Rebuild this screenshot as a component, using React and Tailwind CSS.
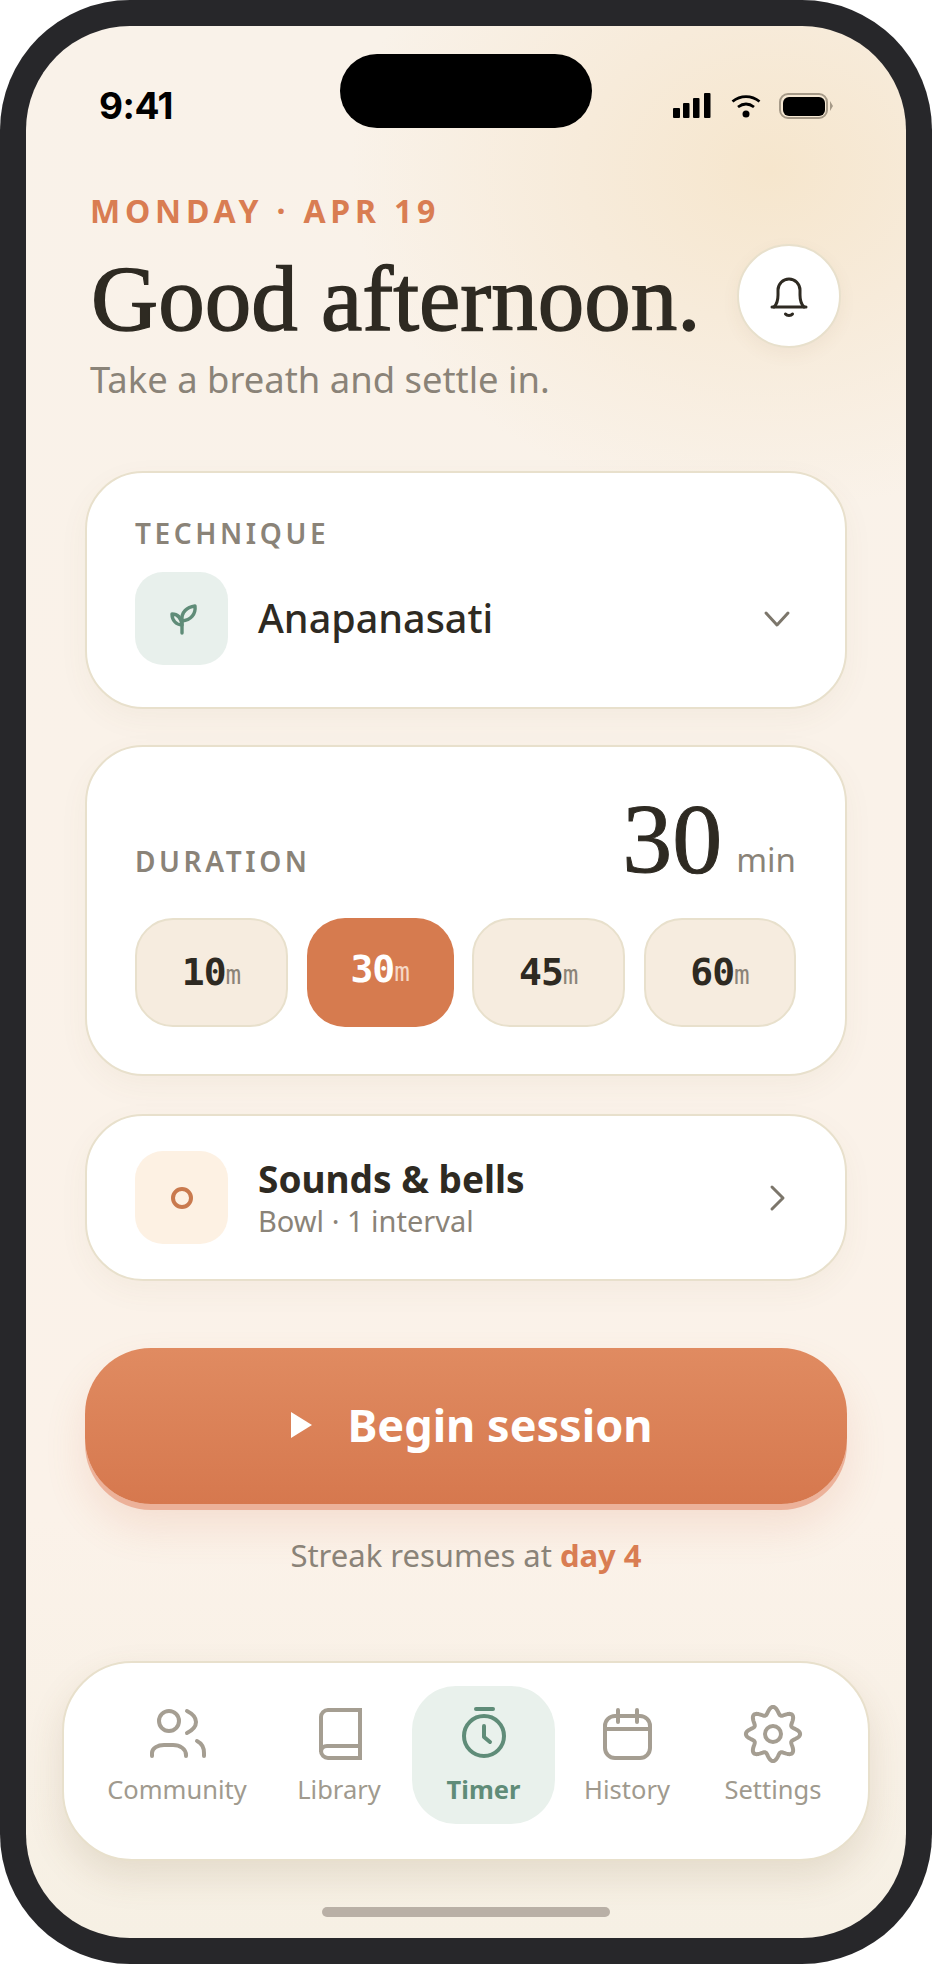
import React from "react";

function gearPath() {
  const pts = [];
  for (let i = 0; i <= 240; i++) {
    const t = (i / 240) * Math.PI * 2;
    const r = 23.5 + 3.6 * Math.cos(8 * t);
    const x = 30 + r * Math.sin(t);
    const y = 29 - r * Math.cos(t);
    pts.push((i ? "L" : "M") + x.toFixed(2) + " " + y.toFixed(2));
  }
  return pts.join("") + "Z";
}

const navIconProps = {
  width: 60,
  height: 60,
  viewBox: "0 0 60 60",
  fill: "none",
  strokeWidth: 4,
  strokeLinecap: "round",
  strokeLinejoin: "round",
};

function CommunityIcon() {
  return (
    <svg {...navIconProps} stroke="#a59e92">
      <circle cx="22" cy="16" r="10" />
      <path d="M40 6c6 3 9 7 9 11s-3 8-9 11" />
      <path d="M5 51v-3c0-5 6-8 12-8h9c7 0 13 4 13 10v1" />
      <path d="M50 36c4 2 7 6 7 12v3" />
    </svg>
  );
}
function BookIcon() {
  return (
    <svg {...navIconProps} stroke="#a59e92" strokeLinecap="butt" strokeLinejoin="miter">
      <path d="M51 5H19a7 7 0 0 0-7 7v34a7 7 0 0 0 7 7h32z" />
      <path d="M12 47a6 6 0 0 1 6-6h33" />
    </svg>
  );
}
function TimerIcon() {
  return (
    <svg {...navIconProps} stroke="#5f8c78">
      <path d="M22 4h17" />
      <circle cx="30" cy="31" r="20" />
      <path d="M30 21v11l6 5" />
    </svg>
  );
}
function CalendarIcon() {
  return (
    <svg {...navIconProps} stroke="#a59e92">
      <rect x="8" y="11" width="45" height="42" rx="10" />
      <path d="M8 24h45" strokeLinecap="butt" />
      <path d="M21 5v12M40 5v12" />
    </svg>
  );
}
function GearIcon() {
  return (
    <svg {...navIconProps} stroke="#a59e92">
      <path d={gearPath()} />
      <circle cx="30" cy="29" r="8" />
    </svg>
  );
}

function NavItem({ w, label, active, children }) {
  return (
    <div className={active ? "flex flex-col items-center h-[138px] pt-[19px] rounded-[44px] bg-[#e9f1ec] " + w : "flex flex-col items-center h-[138px] pt-[19px] " + w}>
      {children}
      <span className={active ? "mt-[8px] text-[25.500px] leading-[32px] font-bold text-[#5f8c78]" : "mt-[8px] text-[25.500px] leading-[32px] font-normal text-[#a09a8e]"}>{label}</span>
    </div>
  );
}

function Chip({ w, value, active }) {
  if (active) {
    return (
      <div className={"h-[109px] rounded-[38px] bg-[#d67b4f] flex items-center justify-center pb-[6px] font-['DejaVu_Sans_Mono',monospace] " + w}>
        <span className="text-[38px] font-bold text-white tracking-[-1px]">{value}</span>
        <span className="text-[26px] text-[#f6d8c6] mt-[6px]">m</span>
      </div>
    );
  }
  return (
    <div className={"h-[109px] rounded-[38px] bg-[#f6ecdf] border-2 border-[#e8e0cc] flex items-center justify-center font-['DejaVu_Sans_Mono',monospace] " + w}>
      <span className="text-[38px] font-bold text-[#2e2a22] tracking-[-1px]">{value}</span>
      <span className="text-[26px] text-[#8a8378] mt-[6px]">m</span>
    </div>
  );
}

export default function App() {
  return (
    <div className="w-[932px] h-[1964px] bg-[#27272a] rounded-[130px] p-[26px] font-['Noto_Sans',sans-serif]">
      <div className="relative w-[880px] h-[1912px] rounded-[104px] overflow-hidden bg-[radial-gradient(ellipse_420px_340px_at_744px_144px,#f6e6cd_0%,#f7ebda_45%,rgba(249,242,233,0)_100%),linear-gradient(to_bottom,#f9f2e9_0%,#fbf2e9_78%,#f6f0e4_100%)]">
        <div className="absolute left-[314px] top-[28px] w-[252px] h-[74px] rounded-full bg-black" />

        <div className="mt-[60px] h-[40px] pl-[73px] pr-[73px] flex items-center justify-between">
          <span className="font-['Inter',sans-serif] font-bold text-[37px] leading-[40px] text-black tracking-[-0.5px]">9:41</span>
          <div className="flex items-center">
            <svg width="38" height="26" viewBox="0 0 38 26" fill="#000">
              <rect x="0" y="15" width="7" height="10" rx="1" />
              <rect x="10" y="10" width="6.5" height="15" rx="1" />
              <rect x="20" y="5" width="6.5" height="20" rx="1" />
              <rect x="31" y="0" width="6.5" height="25" rx="1" />
            </svg>
            <svg className="ml-[20px]" width="30" height="26" viewBox="0 0 30 26" fill="none" stroke="#000" strokeWidth="2.8">
              <path d="M1.5 8.5c8-6.5 19-6.500 27 0" />
              <path d="M7 14c5-3.800 11-3.800 16 0" />
              <circle cx="15" cy="21" r="3.500" fill="#000" stroke="none" />
            </svg>
            <div className="ml-[18px] w-[49px] h-[26px] rounded-[9px] border-2 border-[#a69a88] p-[1.5px]">
              <div className="w-full h-full rounded-[6px] bg-black" />
            </div>
            <svg className="ml-[2px]" width="3" height="10" viewBox="0 0 3 10" fill="#a69a88">
              <path d="M0 0l3 5-3 5z" />
            </svg>
          </div>
        </div>

        <div className="mt-[65px] pl-[64px] h-[40px] text-[32px] leading-[40px] font-bold tracking-[4.8px] text-[#d97d52]">MONDAY · APR 19</div>

        <div className="mt-[13px] pl-[65px] pr-[65px] flex items-start justify-between">
          <h1 className="mt-[7px] font-['Liberation_Serif',serif] font-normal text-[93px] leading-[96px] text-[#2e2a22] [-webkit-text-stroke:1.4px_#2e2a22]">Good afternoon.</h1>
          <div className="w-[104px] h-[104px] rounded-full bg-white border-2 border-[#e8e0cc] flex items-center justify-center shadow-[0_6px_18px_rgba(120,90,50,0.06)]">
            <svg width="48" height="48" viewBox="0 0 48 48" fill="none" stroke="#2e2a22" strokeWidth="3" strokeLinecap="round" strokeLinejoin="round">
              <path d="M9 35c3-3 4-7 4-12v-5a11 11 0 0 1 22 0v5c0 5 1 9 4 12" />
              <path d="M7 35h34" />
              <path d="M20.500 42a4 3 0 0 0 7 0" />
            </svg>
          </div>
        </div>

        <p className="mt-[9px] pl-[64px] h-[44px] text-[36.400px] leading-[44px] text-[#8a8378]">Take a breath and settle in.</p>

        <div className="mt-[70px] mx-[59px] h-[238px] rounded-[58px] bg-white border-2 border-[#e8e0cc] pl-[48px] pr-[52px] pt-[40px] shadow-[0_10px_30px_rgba(120,90,50,0.05)]">
          <div className="h-[40px] text-[28px] leading-[40px] font-semibold tracking-[3.6px] text-[#8a8378]">TECHNIQUE</div>
          <div className="mt-[19px] flex items-center">
            <div className="w-[93px] h-[93px] rounded-[28px] bg-[#e8f0ec] flex items-center justify-center">
              <svg width="32" height="32" viewBox="0 0 32 32" fill="none" stroke="#5f8c78" strokeWidth="3.4" strokeLinecap="round" strokeLinejoin="round">
                <path d="M16 17v13" />
                <path d="M16 18c-1-9 5-14 13-15 1 8-4 14-13 15z" />
                <path d="M16 22c-6 0-10-5-10-11 5 0 9 3 10 11z" />
              </svg>
            </div>
            <span className="ml-[30px] text-[39.500px] font-medium text-[#2e2a22]">Anapanasati</span>
            <svg className="ml-auto" width="32" height="32" viewBox="0 0 32 32" fill="none" stroke="#7c766b" strokeWidth="3" strokeLinecap="round" strokeLinejoin="round">
              <path d="M5 10l11 12 11-12" />
            </svg>
          </div>
        </div>

        <div className="mt-[36px] mx-[59px] h-[331px] rounded-[58px] bg-white border-2 border-[#e8e0cc] pl-[48px] pr-[49px] pt-[43px] shadow-[0_10px_30px_rgba(120,90,50,0.05)]">
          <div className="flex items-baseline justify-between">
            <span className="text-[28px] font-semibold tracking-[3.6px] text-[#8a8378]">DURATION</span>
            <div className="flex items-baseline">
              <span className="font-['Liberation_Serif',serif] text-[100px] leading-[98px] text-[#2e2a22] [-webkit-text-stroke:1px_#2e2a22]">30</span>
              <span className="ml-[14px] text-[33px] text-[#8a8378]">min</span>
            </div>
          </div>
          <div className="mt-[30px] flex justify-between">
            <Chip w="w-[153px]" value="10" />
            <Chip w="w-[147px]" value="30" active />
            <Chip w="w-[153px]" value="45" />
            <Chip w="w-[152px]" value="60" />
          </div>
        </div>

        <div className="mt-[38px] mx-[59px] h-[167px] rounded-[58px] bg-white border-2 border-[#e8e0cc] pl-[48px] pr-[52px] flex items-center shadow-[0_10px_30px_rgba(120,90,50,0.05)]">
          <div className="w-[93px] h-[93px] rounded-[28px] bg-[#fdf1e3] flex items-center justify-center">
            <div className="w-[22px] h-[22px] rounded-full border-4 border-[#c97a4e]" />
          </div>
          <div className="ml-[30px]">
            <div className="text-[37px] leading-[44px] font-bold text-[#2e2a22]">Sounds &amp; bells</div>
            <div className="mt-[2px] text-[29px] leading-[36px] text-[#8a8378]">Bowl · 1 interval</div>
          </div>
          <svg className="ml-auto" width="32" height="32" viewBox="0 0 32 32" fill="none" stroke="#7c766b" strokeWidth="3" strokeLinecap="round" strokeLinejoin="round">
            <path d="M11 5l11 11-11 11" />
          </svg>
        </div>

        <div className="mt-[67px] mx-[59px] h-[156px] rounded-[66px] bg-gradient-to-b from-[#e08b61] to-[#d6784e] flex items-center justify-center shadow-[0_6px_0_#ecb199,0_22px_40px_rgba(214,120,78,0.16)] pb-[3px] pl-[12px]">
          <svg width="21" height="26" viewBox="0 0 21 26" fill="#fff">
            <path d="M0 0l21 13L0 26z" />
          </svg>
          <span className="ml-[35px] text-[45px] font-bold text-white">Begin session</span>
        </div>

        <p className="mt-[32px] h-[38px] text-center text-[31px] leading-[38px] text-[#8a8378]">
          Streak resumes at <span className="font-bold text-[#d97d52]">day 4</span>
        </p>

        <div className="mt-[87px] ml-[36px] w-[808px] h-[200px] rounded-[70px] bg-white border-2 border-[#e8e0cc] pl-[24px] pt-[23px] flex items-start shadow-[0_16px_36px_rgba(120,90,50,0.14)]">
          <NavItem w="w-[178px]" label="Community"><CommunityIcon /></NavItem>
          <NavItem w="w-[146px]" label="Library"><BookIcon /></NavItem>
          <NavItem w="w-[143px]" label="Timer" active><TimerIcon /></NavItem>
          <NavItem w="w-[144px]" label="History"><CalendarIcon /></NavItem>
          <NavItem w="w-[148px]" label="Settings"><GearIcon /></NavItem>
        </div>

        <div className="mt-[46px] mx-auto w-[288px] h-[10px] rounded-full bg-[#b9b0a6]" />
      </div>
    </div>
  );
}
